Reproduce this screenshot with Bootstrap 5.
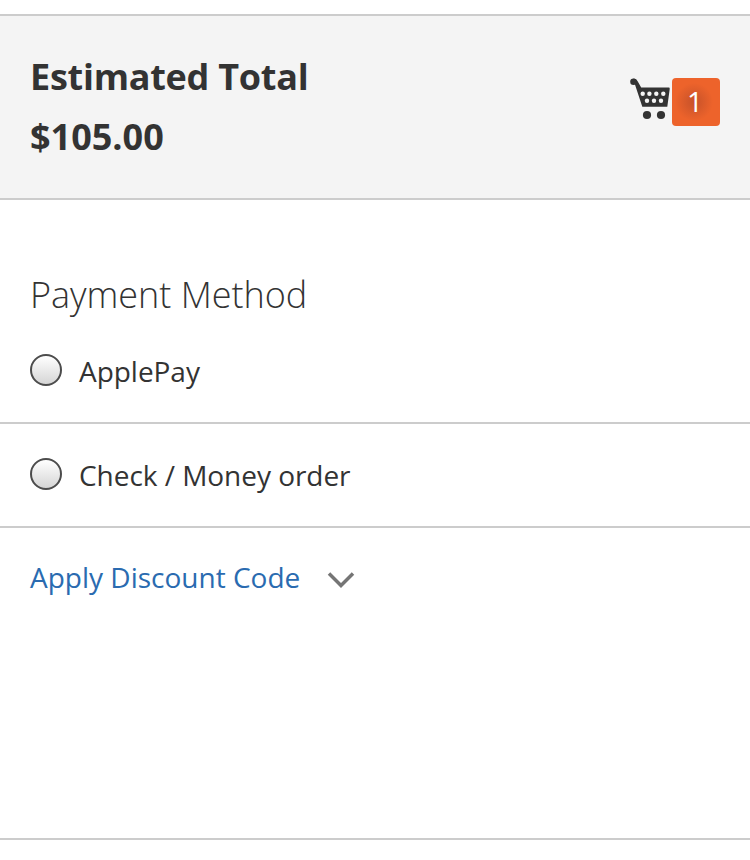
<!DOCTYPE html>
<html lang="en">
<head>
<meta charset="utf-8">
<meta name="viewport" content="width=device-width, initial-scale=1">
<title>Checkout</title>
<link href="https://cdn.jsdelivr.net/npm/bootstrap@5.3.0/dist/css/bootstrap.min.css" rel="stylesheet">
<style>
body{font-family:"Open Sans","Noto Sans",sans-serif;color:#333;font-size:28px;line-height:40px;background:#fff}
.page{height:860px;padding-top:14px;overflow:hidden}
.summary{height:186px;background:#f4f4f4;border-top:2px solid #ccc;border-bottom:2px solid #ccc;padding:31px 30px 0}
.totals{font-weight:700;font-size:36px;line-height:60px;letter-spacing:-.01px}
.totals .caption-line{letter-spacing:-.26px}
.cart-icon{width:40px;height:42px;margin-right:2px}
.cart-count{width:48px;height:48px;padding-right:2px;border-radius:4px;background:radial-gradient(circle at 22px 24px,#c9522a 0,#d2572a 6px,#ed632b 19px);color:#fff;font-size:28px;line-height:47px}
.cart-link{margin-top:31px}
.method-title{font-weight:300;font-size:36px;line-height:40px;letter-spacing:-.03px;padding:75px 30px 0;height:120px;margin:0}
.method{height:104px;border-bottom:2px solid #ccc;padding:0 30px 2px}
.method span{padding-top:2px;letter-spacing:-.04px}
.radio-dot{appearance:none;width:32px;height:32px;margin:-1px 17px 0 0;border:2px solid #4c4c4c;border-radius:50%;background:linear-gradient(#fff,#d5d5d5)}
.discount{height:312px;border-bottom:2px solid #ccc;padding:29px 30px 0}
.discount a{color:#2a6bb0}
.chevron{width:28px;height:18px;margin:14px 0 0 27px}
</style>
</head>
<body>
<main class="page">
<section class="summary d-flex justify-content-between align-items-start">
<div class="totals"><div class="caption-line">Estimated Total</div><div>$105.00</div></div>
<div class="cart-link d-flex align-items-start">
<svg class="cart-icon" viewBox="0 0 40 42">
<path d="M3.500.5Q6.500.8 7.500 3L11.200 9.600H38.700q1.300 0 1 1.300L37.300 28.700H12.300L4.800 6z" fill="#333"/>
<g fill="#333"><circle cx="3.500" cy="3.700" r="3.300"/><circle cx="17" cy="37" r="4.100"/><circle cx="31" cy="37" r="4.100"/></g>
<g fill="#f4f4f4"><circle cx="12.700" cy="15.700" r="2.200"/><circle cx="19.400" cy="15.700" r="2.200"/><circle cx="26.300" cy="15.700" r="2.200"/><circle cx="33.300" cy="15.700" r="2.200"/><circle cx="17" cy="22.700" r="2.200"/><circle cx="24" cy="22.700" r="2.200"/><circle cx="31" cy="22.700" r="2.200"/></g>
</svg>
<span class="cart-count text-center">1</span>
</div>
</section>
<section>
<h1 class="method-title">Payment Method</h1>
<label class="method d-flex align-items-center"><input class="radio-dot" type="radio" name="method"><span>ApplePay</span></label>
<label class="method d-flex align-items-center"><input class="radio-dot" type="radio" name="method"><span>Check / Money order</span></label>
</section>
<section class="discount d-flex align-items-start"><a class="text-decoration-none" href="#">Apply Discount Code</a>
<svg class="chevron" viewBox="0 0 28 18"><path d="M2 2.500l12 12L26 2.500" fill="none" stroke="#757575" stroke-width="3.500"/></svg></section>
</main>
<script src="https://cdn.jsdelivr.net/npm/bootstrap@5.3.0/dist/js/bootstrap.bundle.min.js"></script>
</body>
</html>
